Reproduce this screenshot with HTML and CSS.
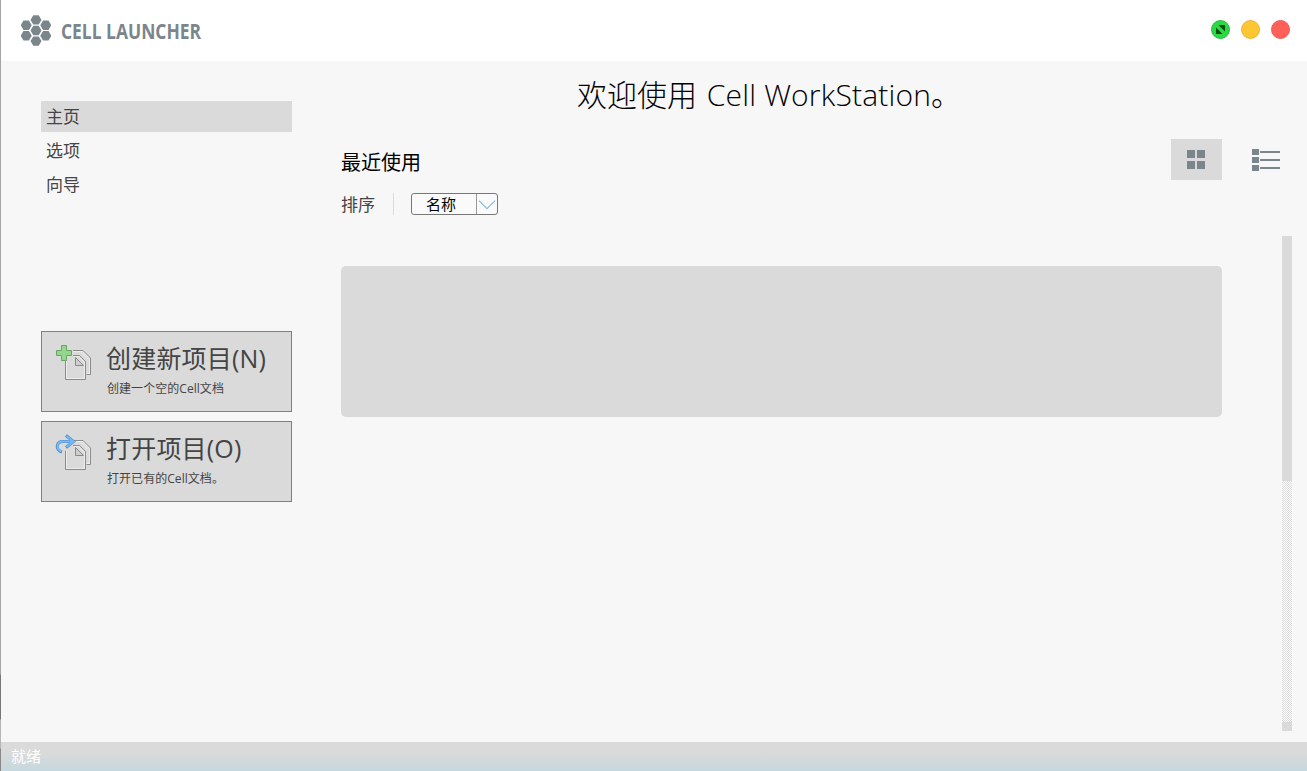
FILE: index.html
```html
<!DOCTYPE html>
<html lang="zh-CN">
<head>
<meta charset="utf-8">
<title>Cell Launcher</title>
<link rel="stylesheet" href="styles.css">
</head>
<body>
<svg class="defs" aria-hidden="true">
  <defs>
    <path id="hex" d="M-2.7-4.7H2.7L5.2-.5V.5L2.7 4.7H-2.7L-5.2.5V-.5Z"/>
    <g id="pages">
      <path class="shine" d="M18 8.500H27.500L34.500 15.500V30.500H31.500M11.500 18V35.500H29.500V19.500L23.500 13.500H19"/>
      <path d="M18 7.500H28L35.500 15V31.500H31.500M18 12.500H24.500L30.500 18.500V36.500H10.500V18"/>
      <path d="M26 9.500L32.500 16" class="shine"/>
      <path d="M20.500 14.500V22.500H28.500L20.500 14.500Z" class="fold"/>
    </g>
  </defs>
</svg>
<div class="window">
  <header class="titlebar">
    <svg class="logo" viewBox="0 0 30 31" width="30" height="31">
      <use href="#hex" x="15" y="4.900"/><use href="#hex" x="5.200" y="10.200"/><use href="#hex" x="24.800" y="10.200"/>
      <use href="#hex" x="15" y="15.500"/><use href="#hex" x="5.200" y="20.800"/><use href="#hex" x="24.800" y="20.800"/>
      <use href="#hex" x="15" y="26.100"/>
    </svg>
    <span class="brand">CELL LAUNCHER</span>
    <div class="controls">
      <span class="dot green"><svg viewBox="0 0 19 19" width="19" height="19"><path d="M7.500 5H14V11.500ZM5 7.500V14H11.500Z"/></svg></span>
      <span class="dot yellow"></span>
      <span class="dot red"></span>
    </div>
  </header>
  <div class="body">
    <aside class="sidebar">
      <nav class="menu">
        <a class="item active">主页</a>
        <a class="item">选项</a>
        <a class="item">向导</a>
      </nav>
      <div class="actions">
        <button class="action">
          <svg class="icon" viewBox="0 0 40 42" width="40" height="42">
            <use href="#pages"/>
            <path class="plus" d="M6.500 2.500H11.500V7.500H16.500V12.500H11.500V17.500H6.500V12.500H1.500V7.500H6.500Z"/>
          </svg>
          <span class="words"><span class="name">创建新项目(N)</span><span class="desc">创建一个空的Cell文档</span></span>
        </button>
        <button class="action">
          <svg class="icon" viewBox="0 0 40 42" width="40" height="42">
            <use href="#pages"/>
            <path class="arrow-edge" d="M7 19C0 16.500 1 8.500 8 8.500H18M11 2.500L18.500 8.500L11 14.500"/>
            <path class="arrow" d="M6.700 18.500C.5 16 1.300 8.500 8 8.500H18M11.500 3L18.500 8.500L11.500 14"/>
          </svg>
          <span class="words"><span class="name">打开项目(O)</span><span class="desc">打开已有的Cell文档。</span></span>
        </button>
      </div>
    </aside>
    <main class="content">
      <h1 class="welcome">欢迎使用 <span class="product">Cell WorkStation</span>。</h1>
      <div class="toolbar">
        <div class="recent">
          <h2>最近使用</h2>
          <div class="sort">
            <span class="sort-label">排序</span>
            <div class="select"><span>名称</span><svg viewBox="0 0 21 20" width="20" height="20"><path d="M2 6.500L10.500 15L19 6.500"/></svg></div>
          </div>
        </div>
        <div class="views">
          <span class="view on"><svg viewBox="0 0 18 19" width="18" height="19"><path d="M0 0H8V8H0ZM10 0H18V8H10ZM0 11H8V19H0ZM10 11H18V19H10Z"/></svg></span>
          <span class="view"><svg viewBox="0 0 28 22" width="28" height="22"><path d="M0 0H7V6H0ZM0 8H7V14H0ZM0 16H7V22H0ZM8 2H28V4H8ZM8 10H28V12H8ZM8 18H28V20H8Z"/></svg></span>
        </div>
      </div>
      <div class="list">
        <div class="card"></div>
        <div class="scrollbar"><div class="thumb"></div><div class="track"></div><div class="end"></div></div>
      </div>
    </main>
  </div>
  <footer class="status">就绪</footer>
</div>
</body>
</html>
```
FILE: styles.css
```css
* { box-sizing: border-box; }
body { margin: 0; font-family: "Open Sans", "Noto Sans CJK SC", sans-serif; color: #444; }
.defs { position: absolute; width: 0; height: 0; }
.window {
  height: 771px; display: flex; flex-direction: column; overflow: hidden;
  padding-left: 1px;
  background: linear-gradient(#a5a5a5 0 674px, #777 675px 719px, #b5b5b5 720px 748px, #888 749px) 0 0 / 1px 100% no-repeat;
}
.titlebar { height: 61px; flex: none; background: #fff; display: flex; align-items: center; padding: 0 17px 1px 20px; }
.logo { fill: #7b858c; margin-top: 1px; }
.brand {
  margin-left: 10px; margin-top: 2px; width: 141px; white-space: nowrap;
  font-size: 21px; font-weight: 700; line-height: 28px; color: #7b858c;
  transform: scaleX(.83); transform-origin: left;
}
.controls { margin-left: auto; margin-bottom: 1px; display: flex; gap: 11px; }
.dot { width: 19px; height: 19px; border-radius: 50%; border: 1px solid; display: flex; }
.dot svg { flex: none; margin: -1px; fill: #064f0d; }
.green { background: #2bd945; border-color: #25bd3a; }
.yellow { background: #ffc634; border-color: #ecb32c; }
.red { background: #ff6058; border-color: #f45952; }
.body { height: 681px; flex: none; display: flex; background: #f7f7f7; }
.sidebar { width: 291px; padding: 40px 0 0 40px; flex: none; }
.menu { height: 230px; display: flex; flex-direction: column; gap: 3px; }
.item { height: 31px; padding-left: 5px; font-size: 17px; line-height: 31px; }
.active { background: #dadada; }
.actions { display: grid; gap: 9px; }
.action {
  height: 81px; padding: 11px 0 0 13px; display: flex; align-items: flex-start; text-align: left;
  background: #dadada; border: 1px solid #808080; font: inherit; color: #444;
}
.icon { flex: none; stroke: #8b8b8b; fill: none; margin-right: 11px; }
.shine { stroke: #ececec; stroke-width: 1; fill: none; }
.fold { fill: #cdcdcd; }
.plus { fill: #92d78c; stroke: #6aa365; }
.arrow-edge { stroke: #5686b5; stroke-width: 3; }
.arrow { stroke: #74b9fb; stroke-width: 2; }
.words { display: flex; flex-direction: column; white-space: nowrap; }
.name { font-size: 25px; line-height: 34px; margin-top: -2px; letter-spacing: .2px; }
.desc { font-size: 12px; line-height: 18px; margin: 5px 0 0 1px; letter-spacing: .05px; }
.content { flex: 1; padding: 15px 15px 0 49px; display: flex; flex-direction: column; }
.welcome { margin: 0; padding-left: 236px; height: 63px; color: #000; font-size: 30px; line-height: 38px; font-weight: 300; white-space: nowrap; }
.product { display: inline-block; margin-left: 2px; letter-spacing: .18px; }
.toolbar { height: 97px; display: flex; justify-content: space-between; }
.recent h2 { margin: 9px 0 0; color: #000; font-weight: 400; font-size: 20px; line-height: 30px; }
.sort { display: flex; align-items: center; height: 22px; margin-top: 15px; }
.sort-label { width: 53px; border-right: 1px solid #dadada; font-size: 17px; line-height: 24px; height: 22px; }
.select { margin-left: 17px; width: 87px; height: 22px; border: 1px solid #777; border-radius: 3px; display: flex; background: #fafafa; color: #000; font-size: 15px; line-height: 20px; }
.select span { width: 65px; flex: none; padding-left: 14px; border-right: 1px solid #999; }
.select svg { fill: none; stroke: #82bde0; stroke-width: 1.200; }
.views { display: flex; gap: 19px; }
.view { width: 51px; height: 41px; display: flex; align-items: center; justify-content: center; }
.view svg { fill: #7b858c; margin-right: 1px; }
.on { background: #dadada; }
.list { display: flex; justify-content: space-between; height: 495px; }
.card { width: 881px; height: 151px; margin-top: 30px; border-radius: 5px; background: #dadada; }
.scrollbar { width: 10px; display: flex; flex-direction: column; }
.thumb { height: 245px; background: #dadada; }
.track { flex: 1; background: repeating-conic-gradient(#dadada 0 25%, #fff 0 50%) 0 0 / 2px 2px; }
.end { height: 9px; background: #dadada; }
.status { height: 29px; padding-left: 10px; background: linear-gradient(#dadada 0 35%, #c6d8dd); color: #fff; font-size: 15px; line-height: 29px; }
```
